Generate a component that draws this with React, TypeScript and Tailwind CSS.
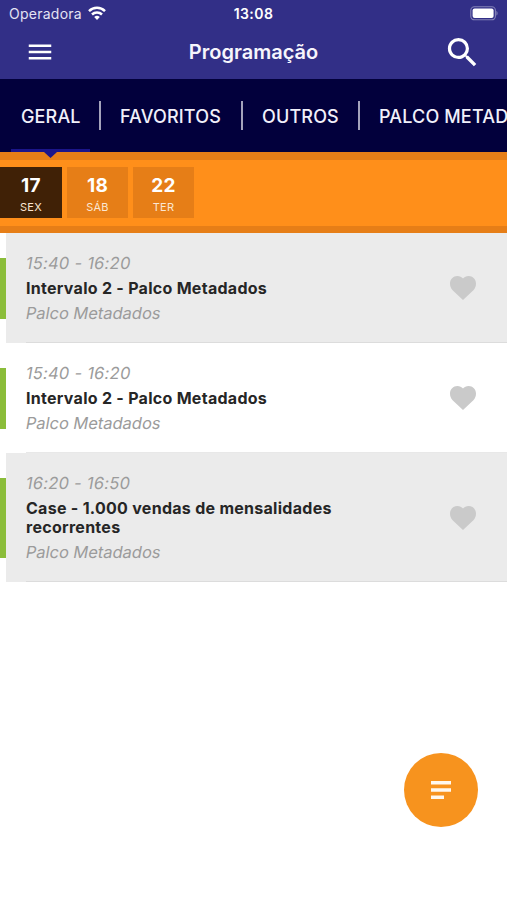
import clsx from "clsx";
import { MdMenu, MdSearch } from "react-icons/md";

const tabs = [
  { label: "GERAL", width: "w-[59px]" },
  { label: "FAVORITOS", width: "w-[102px]" },
  { label: "OUTROS", width: "w-[77px]" },
  { label: "PALCO METADADOS", width: "w-[190px]" },
];

const days = [
  { day: "17", name: "SEX", active: true },
  { day: "18", name: "SÁB", active: false },
  { day: "22", name: "TER", active: false },
];

const sessions = [
  { time: "15:40 - 16:20", title: "Intervalo 2 - Palco Metadados", place: "Palco Metadados" },
  { time: "15:40 - 16:20", title: "Intervalo 2 - Palco Metadados", place: "Palco Metadados" },
  { time: "16:20 - 16:50", title: "Case - 1.000 vendas de mensalidades recorrentes", place: "Palco Metadados" },
];

function StatusBar() {
  return (
    <div className="grid h-[26px] grid-cols-3 items-center pl-[9px] pr-[9px] text-[#e4e3f3]">
      <div className="flex items-center gap-[6px]">
        <span className="text-[14px] tracking-[0.25px]">Operadora</span>
        <svg width="18" height="14" viewBox="0 0 18 14" fill="none" stroke="white" strokeWidth="2.5">
          <path d="M1 5.1a11.4 11.4 0 0 1 16 0" />
          <path d="M4 8.5a7.2 7.2 0 0 1 10 0" />
          <path d="M9 14 6.2 11a4 4 0 0 1 5.6 0Z" fill="white" stroke="none" />
        </svg>
      </div>
      <span className="text-center text-[14px] font-semibold tracking-[0.45px] text-white">13:08</span>
      <svg className="justify-self-end" width="28" height="15" viewBox="0 0 28 15">
        <rect x="0.8" y="0.8" width="24.6" height="13" rx="3.6" fill="none" stroke="#8482b8" strokeWidth="1.1" />
        <rect x="2.6" y="2.6" width="21" height="9.4" rx="2" fill="white" />
        <path d="M26.4 5v4.6c1.6-.6 1.6-4 0-4.6Z" fill="#8482b8" />
      </svg>
    </div>
  );
}

function Heart() {
  return (
    <svg className="ml-auto" width="26" height="24" viewBox="0 0 26 24" fill="#cacaca">
      <path d="M13 24 2.6 14.2C.8 12.4 0 10.2 0 7.6 0 3.2 3.3 0 7.4 0 9.7 0 11.7 1 13 2.6 14.3 1 16.3 0 18.6 0 22.7 0 26 3.2 26 7.6c0 2.6-.8 4.8-2.6 6.6Z" />
    </svg>
  );
}

export default function App() {
  return (
    <div className="relative h-[900px] w-[507px] overflow-hidden bg-white font-['Inter',sans-serif]">
      {/* Header */}
      <header className="h-[79px] bg-[#322f87]">
        <StatusBar />
        <div className="grid h-[52px] grid-cols-[60px_1fr_60px] items-center pl-[25px] pr-[25px] text-white">
          <MdMenu size={30} />
          <h1 className="text-center text-[20px] font-semibold leading-6 text-[#f6f5fc]">Programação</h1>
          <MdSearch size={39} className="justify-self-end" />
        </div>
      </header>

      {/* Tabs */}
      <nav className="relative flex h-[73px] items-center bg-[#02003c] pl-[21px]">
        {tabs.map((tab, i) => (
          <div key={tab.label} className="flex shrink-0 items-center">
            {i > 0 && <span className="mx-[19px] h-[29px] w-[2px] bg-[#a4a3bb]" />}
            <span className={clsx("whitespace-nowrap pt-px text-[18px] font-medium tracking-[0.15px] text-[#f1f0fa]", tab.width)}>
              {tab.label}
            </span>
          </div>
        ))}
        <span className="absolute bottom-0 left-[11px] h-[3px] w-[79px] bg-[#1b158a]" />
        <svg className="absolute -bottom-[6px] left-[44px] z-10" width="13" height="6" viewBox="0 0 13 6">
          <path d="M0 0h13L6.5 6Z" fill="#1b158a" />
        </svg>
      </nav>

      {/* Days */}
      <div className="flex h-[81px] gap-[5px] border-b-[7px] border-t-8 border-[#e67e17] bg-[#ff8f1a] pt-[7px] text-white">
        {days.map((d) => (
          <div
            key={d.day}
            className={clsx(
              "flex h-[51px] flex-col items-center",
              d.active ? "w-[62px] bg-[#402106]" : "w-[61px] bg-[#e67e17]",
            )}
          >
            <span className="mt-[7px] text-[19px] font-bold leading-6 tracking-[0.3px]">{d.day}</span>
            <span className="mt-[2px] text-[11px] leading-[14px] tracking-[0.2px] text-[#fbe6d2]">{d.name}</span>
          </div>
        ))}
      </div>

      {/* Sessions */}
      <ul>
        {sessions.map((s, i) => (
          <li key={i} className="relative flex">
            <span className="my-[24.5px] w-[6px] bg-[#8bbd3a]" />
            <div className={clsx("flex flex-1 items-center pl-5 pr-[31px]", i % 2 === 0 ? "bg-[#ebebeb]" : "bg-white")}>
              <div className="w-[345px] py-[19px]">
                <p className="-skew-x-[10deg] text-[16.5px] leading-[22px] tracking-[0.25px] text-[#9b9b9b]">{s.time}</p>
                <h2 className="my-[5px] text-[16px] font-bold leading-[19px] tracking-[0.28px] text-[#262626]">
                  {s.title}
                </h2>
                <p className="-skew-x-[10deg] text-[16.5px] leading-[21px] tracking-[-0.03px] text-[#9b9b9b]">{s.place}</p>
              </div>
              <Heart />
            </div>
            <span className={clsx("absolute bottom-0 left-[26px] right-0 h-px", i % 2 === 0 ? "bg-[#dcdcdc]" : "bg-[#e8e8e8]")} />
          </li>
        ))}
      </ul>

      <button className="absolute left-[404px] top-[753px] flex size-[74px] items-center justify-center rounded-full bg-[#f7931e]">
        <svg width="20" height="18" viewBox="0 0 20 18" fill="#fff8ee">
          <path d="M0 0h20v3.6H0zM0 7.2h20v3.6H0zM0 14.4h13V18H0z" />
        </svg>
      </button>
    </div>
  );
}
